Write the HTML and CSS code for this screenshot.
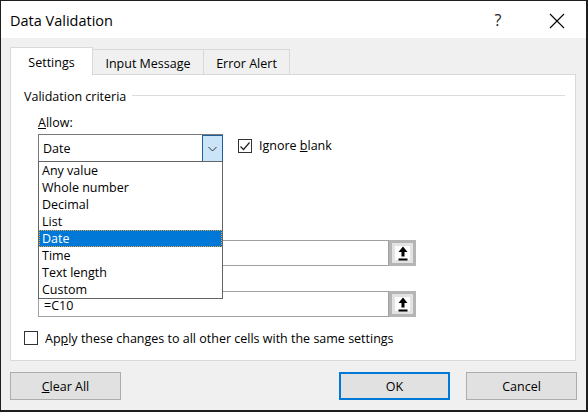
FILE: index.html
```html
<!DOCTYPE html>
<html>
<head>
<meta charset="utf-8">
<link rel="stylesheet" href="styles.css">
</head>
<body>
<div class="window">
  <div class="titlebar">
    <span class="title">Data Validation</span>
    <span class="help">?</span>
    <span class="close"><svg width="16" height="16" viewBox="0 0 16 16"><path d="M1 1 L15 15 M15 1 L1 15" stroke="#000" stroke-width="1.1" fill="none"/></svg></span>
  </div>
  <div class="tabs">
    <div class="tab active">Settings</div>
    <div class="tab t2">Input Message</div>
    <div class="tab t3">Error Alert</div>
  </div>
  <div class="panel">
    <div class="group-head"><span>Validation criteria</span><span class="rule"></span></div>
    <div class="criteria">
      <div class="label"><u>A</u>llow:</div>
      <div class="row">
        <div class="combo">
          <span class="value">Date</span>
          <span class="drop"><svg width="9" height="6" viewBox="0 0 9 6"><path d="M0.5 1 L4.5 5 L8.5 1" stroke="#333" stroke-width="1" fill="none"/></svg></span>
          <ul class="list">
            <li>Any value</li>
            <li>Whole number</li>
            <li>Decimal</li>
            <li>List</li>
            <li class="sel">Date</li>
            <li>Time</li>
            <li>Text length</li>
            <li>Custom</li>
          </ul>
        </div>
        <div class="check"><span class="box"><svg width="12" height="12" viewBox="0 0 12 12"><path d="M1.5 6.5 L4.5 9.5 L10.5 2.5" stroke="#222" stroke-width="1.2" fill="none"/></svg></span><span>Ignore <u>b</u>lank</span></div>
      </div>
      <div class="ref-row r1">
        <div class="ref-input"></div>
        <div class="ref-btn"><svg width="10" height="15" viewBox="0 0 10 15"><path d="M5 0.5 L9.5 6 L6.5 6 L6.5 10.5 L3.5 10.5 L3.5 6 L0.5 6 Z" fill="#000"/><rect x="0.5" y="12.5" width="9" height="2" fill="#000"/></svg></div>
      </div>
      <div class="ref-row r2">
        <div class="ref-input">=C10</div>
        <div class="ref-btn"><svg width="10" height="15" viewBox="0 0 10 15"><path d="M5 0.5 L9.5 6 L6.5 6 L6.5 10.5 L3.5 10.5 L3.5 6 L0.5 6 Z" fill="#000"/><rect x="0.5" y="12.5" width="9" height="2" fill="#000"/></svg></div>
      </div>
    </div>
    <div class="check apply"><span class="box"></span><span>Ap<u>p</u>ly these changes to all other cells with the same settings</span></div>
  </div>
  <div class="footer">
    <div class="btn"><u>C</u>lear All</div>
    <div class="spacer"></div>
    <div class="btn default">OK</div>
    <div class="btn">Cancel</div>
  </div>
</div>
</body>
</html>
```
FILE: styles.css
```css
* { box-sizing: border-box; }
html, body { margin: 0; padding: 0; }
body {
  width: 588px;
  height: 412px;
  font-family: "Open Sans", "Noto Sans", sans-serif;
  font-size: 12.5px;
  color: #000;
  background: #fff;
  overflow: hidden;
}
.window {
  width: 588px;
  height: 412px;
  border-style: solid;
  border-color: #1e1e1e;
  border-width: 1px 2px 2px 1px;
  background: #f0f0f0;
  display: flex;
  flex-direction: column;
}
.titlebar {
  height: 37px;
  background: #fff;
  display: flex;
  align-items: center;
  padding-left: 9px;
  flex: none;
}
.title {
  font-size: 14.5px;
  flex: 1;
  padding-top: 1px;
}
.help {
  width: 30px;
  text-align: center;
  font-size: 16px;
  color: #222;
}
.close {
  width: 30px;
  margin-left: 29px;
  margin-right: 14px;
  display: flex;
  justify-content: center;
  padding-top: 2px;
}
.tabs {
  display: flex;
  align-items: flex-end;
  margin-top: 9px;
  padding-left: 9px;
  height: 27px;
  flex: none;
  position: relative;
  z-index: 2;
}
.tab {
  height: 25px;
  border-top: 1px solid #d9d9d9;
  border-right: 1px solid #d9d9d9;
  display: flex;
  align-items: center;
  justify-content: center;
  padding-top: 2px;
}
.tab.active {
  height: 28px;
  width: 83px;
  margin-bottom: -1px;
  background: #fff;
  border-left: 1px solid #d9d9d9;
  padding-top: 2px;
}
.t2 { width: 111px; }
.t3 { width: 86px; }
.panel {
  margin-left: 9px;
  width: 566px;
  height: 287px;
  background: #fff;
  border: 1px solid #d9d9d9;
  padding: 13px 10px 0 13px;
  flex: none;
}
.group-head {
  display: flex;
  align-items: center;
  height: 16px;
}
.rule {
  flex: 1;
  height: 1px;
  background: #dcdcdc;
  margin-left: 6px;
  margin-top: -1px;
}
.criteria {
  padding-left: 14px;
}
.label {
  margin-top: 11px;
  height: 16px;
  line-height: 16px;
}
.row {
  margin-top: 3px;
  display: flex;
  align-items: center;
  height: 28px;
}
.combo {
  position: relative;
  width: 185px;
  height: 28px;
  border: 1px solid #7a7a7a;
  display: flex;
  align-items: center;
  padding-left: 4px;
  padding-top: 1px;
}
.drop {
  position: absolute;
  top: 0;
  right: -1px;
  bottom: -1px;
  width: 21px;
  background: #cce4f7;
  border: 1px solid #1f5f99;
  display: flex;
  align-items: center;
  justify-content: center;
}
.list {
  position: absolute;
  left: -1px;
  top: 26px;
  width: 185px;
  margin: 0;
  padding: 0;
  list-style: none;
  background: #fff;
  border: 1px solid #646464;
  z-index: 5;
}
.list li {
  height: 17px;
  line-height: 17px;
  padding-left: 3px;
}
.list li.sel {
  background: #0078d7;
  color: #fff;
  outline: 1px dotted #e8a040;
  outline-offset: -1px;
}
.check {
  display: flex;
  align-items: center;
}
.box {
  width: 14px;
  height: 14px;
  border: 1px solid #333;
  background: #fff;
  display: flex;
  align-items: center;
  justify-content: center;
  margin-right: 7px;
  flex: none;
}
.row .check {
  margin-left: 15px;
  margin-top: -5px;
}
.ref-row {
  display: flex;
  height: 26px;
}
.r1 { margin-top: 78px; }
.r2 { margin-top: 25px; }
.ref-input {
  width: 351px;
  height: 26px;
  border: 1px solid #a0a0a0;
  padding-left: 5px;
  padding-top: 6px;
  line-height: 16px;
}
.ref-btn {
  width: 27px;
  height: 26px;
  border: 3px solid #b5b5b5;
  background: #fdfdfd;
  box-shadow: inset 0 0 0 3px #e3e3e3;
  display: flex;
  align-items: center;
  justify-content: center;
}
.apply {
  margin-top: 13px;
  height: 16px;
}
.footer {
  display: flex;
  margin-top: 11px;
  padding-left: 9px;
  flex: none;
}
.spacer { flex: 1; }
.btn {
  width: 111px;
  height: 28px;
  background: #e1e1e1;
  border: 1px solid #adadad;
  display: flex;
  align-items: center;
  justify-content: center;
  margin-right: 16px;
}
.btn:last-child { margin-right: 9px; }
.btn.default { border: 2px solid #0078d7; }
```
